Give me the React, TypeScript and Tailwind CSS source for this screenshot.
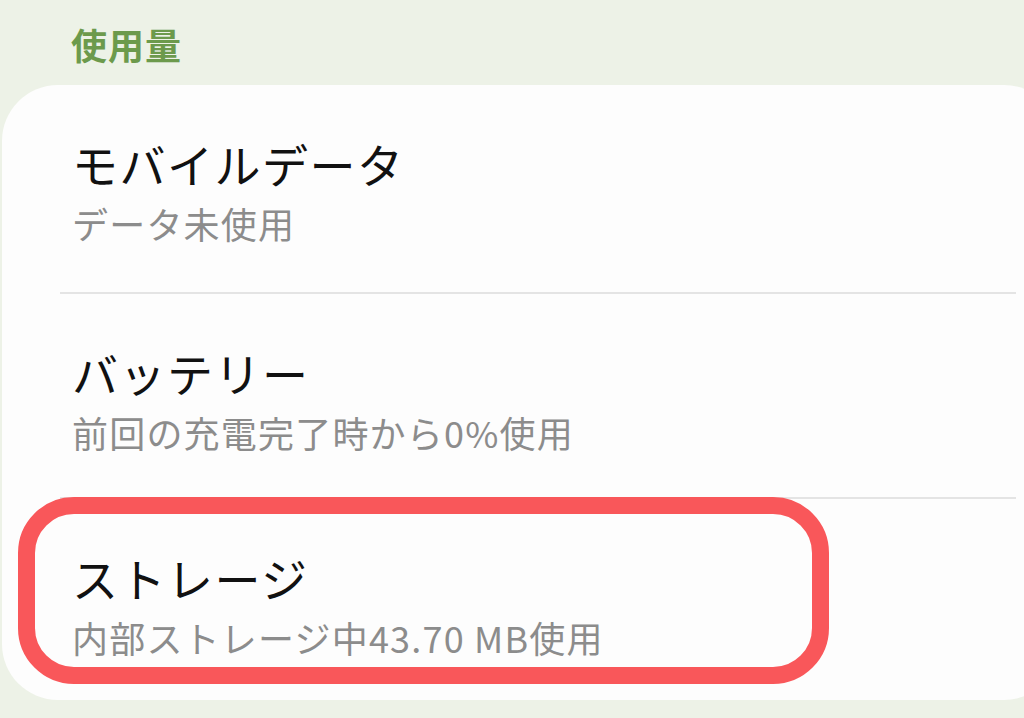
import React from 'react';

type UsageRow = { title: string; detail: string; pad: string };

// padding per row taken from the reference (rows are not perfectly even)
const rows: UsageRow[] = [
  { title: 'モバイルデータ', detail: 'データ未使用', pad: 'pt-[51px] pb-[47px]' },
  { title: 'バッテリー', detail: '前回の充電完了時から0%使用', pad: 'pt-[51px] pb-[43px]' },
  { title: 'ストレージ', detail: '内部ストレージ中43.70 MB使用', pad: 'pt-[51px] pb-[41px]' },
];

export default function App() {
  return (
    <div className="relative h-[718px] w-[1024px] overflow-hidden bg-[#edf2e7] font-['Noto_Sans_CJK_JP','Noto_Sans',sans-serif]">
      <div className="h-[85px] pl-[71px] pt-[22px]">
        <h2 className="text-[36px] font-bold leading-[44px] tracking-[1px] text-[#6c9a4c]">使用量</h2>
      </div>

      <div className="ml-[2px] w-[1058px] rounded-[56px] bg-[#fdfdfd]">
        {rows.map((row, i) => (
          <div key={row.title}>
            {i > 0 && <div className="ml-[58px] mr-[44px] h-[2px] bg-[#e4e4e4]" />}
            <div className={`flex flex-col gap-[11px] pl-[70px] ${row.pad}`}>
              <span className="text-[46px] leading-[55px] tracking-[1.5px] text-[#111111]">{row.title}</span>
              <span className="text-[36px] leading-[43px] tracking-[1.2px] text-[#8c8c8c]">{row.detail}</span>
            </div>
          </div>
        ))}
      </div>

      {/* highlight annotation around the storage row */}
      <div
        aria-hidden
        className="absolute left-[18px] top-[497px] h-[187px] w-[811px] rounded-[56px] border-[17px] border-[#f9575a]"
      />
    </div>
  );
}
